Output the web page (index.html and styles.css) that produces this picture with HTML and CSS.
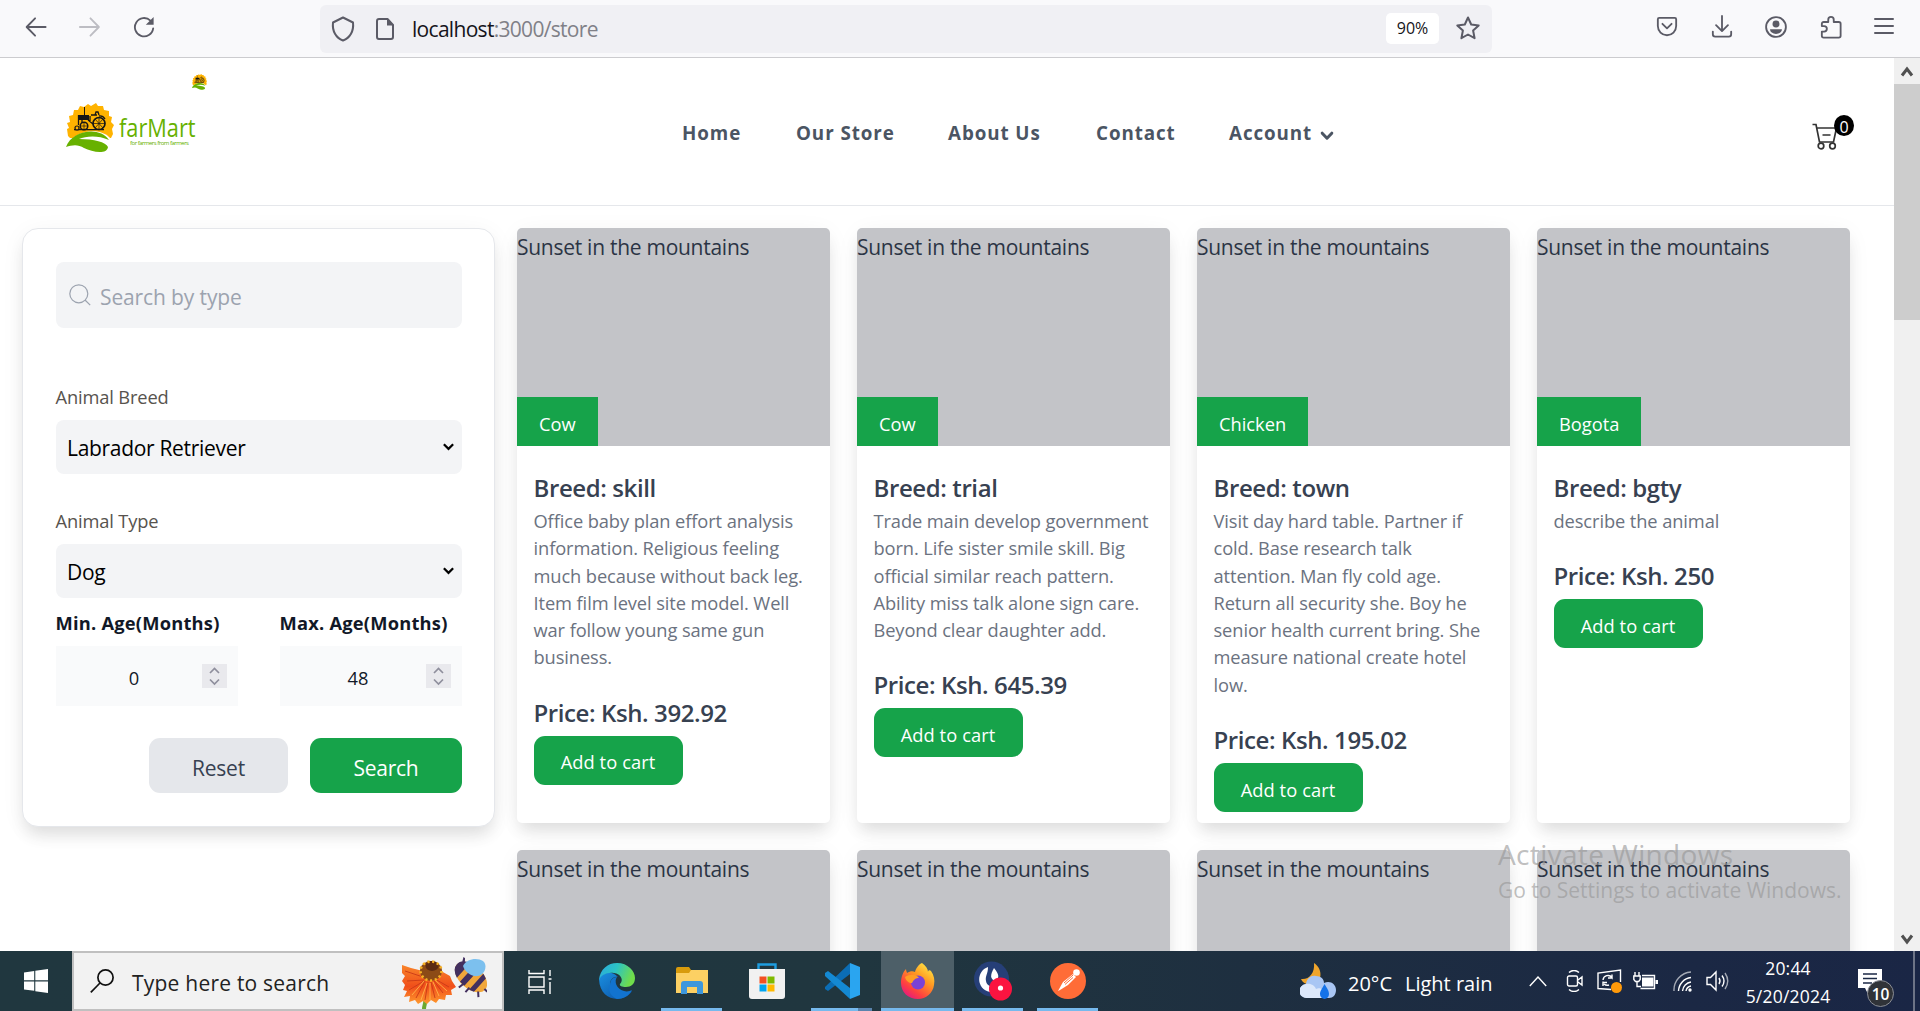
FILE: index.html
```html
<!DOCTYPE html>
<html lang="en">
<head>
<meta charset="utf-8">
<title>farMart store</title>
<link rel="stylesheet" href="styles.css">
</head>
<body>
<svg width="0" height="0" class="defs" aria-hidden="true">
  <defs>
    <symbol id="sun-tractor" viewBox="0 0 48 50">
      <path fill="#ffb300" d="M2 33 L1 26 3 25 1 20 4 19 3 13 7 12 8 7 12 7 14 3 18 4 22 1 25 3 30 0 32 3 37 3 38 7 43 8 43 13 46 14 45 19 48 22 46 26 47 31 45 35 H4Z"/>
      <path fill="#161616" d="M12 12h11v5H12zM18 4h1v8H18zM8 26h30v1.200H8z"/>
      <path fill="none" stroke="#161616" stroke-width="1.300" d="M12.500 12v10M16 12v10M22 17l5 4M25 12h6M29 12l1-3 2 0 1 3M33 13a6 6 0 0 1 6 3M24 13v6"/>
      <circle cx="18" cy="23" r="3.800" fill="#ffb300" stroke="#161616" stroke-width="1.500"/>
      <circle cx="11" cy="25" r="2" fill="#ffb300" stroke="#161616" stroke-width="1.200"/>
      <circle cx="33" cy="20.500" r="6" fill="#ffb300" stroke="#161616" stroke-width="1.700"/>
      <path stroke="#161616" stroke-width=".7" d="M27 20.500h12M33 14v13M29 16l8 9M37 16l-8 9M15 23h6M18 20v6"/>
      <path fill="#fff" d="M0 44C6 28 34 22 45 36v8z"/>
      <path fill="#67b100" d="M0 44C6 27 34 23 43 37 32 32 20 33 13 36c15 0 27 3 29 8-1 8-16 5-24 1C12 41 6 42 0 44Z"/>
    </symbol>
    <symbol id="chev" viewBox="0 0 14 10"><path d="M2 2l5 5 5-5" fill="none" stroke="currentColor" stroke-width="2.400"/></symbol>
    <symbol id="spin" viewBox="0 0 25 24"><path fill="none" stroke="#8f8f9d" stroke-width="1.700" d="M8 9l4.500-4.500L17 9M8 15.500l4.500 4.500 4.500-4.500"/></symbol>
  </defs>
</svg>

<div class="screen">
  <div class="toolbar">
    <svg class="ic back" viewBox="0 0 24 24"><path d="M22.500 12H2M11 2.500L1.800 12l9.200 9.500"/></svg>
    <svg class="ic fwd" viewBox="0 0 24 24"><path d="M1 12h20.500M12.500 2.500l9.200 9.500-9.200 9.500"/></svg>
    <svg class="ic reload" viewBox="0 0 24 24"><path d="M22 13.500A10 10 0 1 1 19 5"/><path class="solid" d="M22.500 1v8.500H14z"/></svg>
    <div class="urlbar">
      <svg class="ic shield" viewBox="0 0 24 26"><path d="M12 1.500L22 6.500C23 15 19 22 12 24.500 5 22 1 15 2 6.500Z"/></svg>
      <svg class="ic page" viewBox="0 0 20 24"><path d="M4 2h8.500L18 8v12a2 2 0 0 1-2 2H4a2 2 0 0 1-2-2V4a2 2 0 0 1 2-2z"/><path class="solid" d="M12 1l7 7.500h-7z"/></svg>
      <span class="url">localhost<i>:3000/store</i></span>
      <span class="zoom">90%</span>
      <svg class="ic star" viewBox="0 0 26 26"><path d="M13 2.500l3.200 7 7.500.9-5.600 5.100 1.500 7.700L13 19.500l-6.600 3.700 1.500-7.700-5.600-5.100 7.500-.9z"/></svg>
    </div>
    <div class="tools">
      <svg class="ic" viewBox="0 0 24 24"><path d="M3.500 2h17A1.500 1.500 0 0 1 22 3.500V11a10 10 0 0 1-20 0V3.500A1.500 1.500 0 0 1 3.500 2zM7 8.500l5 5 5-5"/></svg>
      <svg class="ic" viewBox="0 0 24 24"><path d="M12 0v16M5.500 10l6.500 6.500 6.500-6.500M2 17v3a2.500 2.500 0 0 0 2.500 2.500h15A2.500 2.500 0 0 0 22 20v-3"/></svg>
      <svg class="ic" viewBox="0 0 24 24"><circle cx="12" cy="12" r="10.800"/><circle class="solid" cx="12" cy="8.700" r="3.800"/><path class="solid" d="M5.500 14.500h13c0 3-3 5-6.500 5s-6.500-2-6.500-5z"/></svg>
      <svg class="ic" viewBox="0 0 24 26"><path d="M4 24.500a2 2 0 0 1-2-2V18h2.500a3 3 0 0 0 0-6H2V9.500a2 2 0 0 1 2-2h5V5a3 3 0 0 1 6 0v2.500h5.500a2 2 0 0 1 2 2v13a2 2 0 0 1-2 2z"/></svg>
      <svg class="ic menu" viewBox="0 0 20 24"><path d="M1 4h18M1 11h18M1 18h18"/></svg>
    </div>
  </div>

  <div class="viewport">
    <div class="page-body">
      <header class="site-header">
        <div class="logo">
          <svg class="mark" viewBox="0 0 48 50"><use href="#sun-tractor"/></svg>
          <div class="brand"><b>farMart</b><small>for farmers from farmers</small></div>
          <svg class="mini" viewBox="0 0 48 50" preserveAspectRatio="none"><use href="#sun-tractor"/></svg>
        </div>
        <nav class="nav">
          <a class="n1">Home</a><a class="n2">Our Store</a><a class="n3">About Us</a><a class="n4">Contact</a><a class="n5">Account</a>
          <svg class="nav-chev" viewBox="0 0 14 10"><path d="M2.200 2.200l4.800 5 4.800-5" fill="none" stroke="currentColor" stroke-width="3" stroke-linecap="round" stroke-linejoin="round"/></svg>
        </nav>
        <div class="cart">
          <svg viewBox="0 0 26 28"><g fill="none" stroke="#333" stroke-width="1.700"><path d="M.5 2.500H4L7.500 20H21.500L24.500 6H5M10.500 13h8"/><circle cx="9" cy="24" r="2.800"/><circle cx="20.500" cy="24" r="2.800"/></g></svg>
          <span class="count">0</span>
        </div>
      </header>

      <main class="content">
        <form class="filters">
          <div class="search-box">
            <svg viewBox="0 0 22 22"><g fill="none" stroke="#9ca3af" stroke-width="1.200"><circle cx="9.800" cy="9.800" r="9"/><path d="M16 16l5.200 5.200"/></g></svg>
            <span>Search by type</span>
          </div>
          <label class="lbl lbl-breed">Animal Breed</label>
          <div class="select"><span>Labrador Retriever</span><svg><use href="#chev"/></svg></div>
          <label class="lbl lbl-type">Animal Type</label>
          <div class="select"><span>Dog</span><svg><use href="#chev"/></svg></div>
          <div class="ages">
            <div class="age"><label>Min. Age(Months)</label><div class="num"><span>0</span><svg><use href="#spin"/></svg></div></div>
            <div class="age"><label>Max. Age(Months)</label><div class="num"><span>48</span><svg><use href="#spin"/></svg></div></div>
          </div>
          <div class="actions"><button type="button" class="reset">Reset</button><button type="button" class="submit">Search</button></div>
        </form>

        <section class="products">
          <article class="card">
            <div class="photo"><span class="alt">Sunset in the mountains</span><span class="tag">Cow</span></div>
            <div class="info"><h3>Breed: skill</h3><p>Office baby plan effort analysis<br>information. Religious feeling<br>much because without back leg.<br>Item film level site model. Well<br>war follow young same gun<br>business.</p><h4>Price: Ksh. 392.92</h4><button>Add to cart</button></div>
          </article>
          <article class="card">
            <div class="photo"><span class="alt">Sunset in the mountains</span><span class="tag">Cow</span></div>
            <div class="info"><h3>Breed: trial</h3><p>Trade main develop government<br>born. Life sister smile skill. Big<br>official similar reach pattern.<br>Ability miss talk alone sign care.<br>Beyond clear daughter add.</p><h4>Price: Ksh. 645.39</h4><button>Add to cart</button></div>
          </article>
          <article class="card">
            <div class="photo"><span class="alt">Sunset in the mountains</span><span class="tag">Chicken</span></div>
            <div class="info"><h3>Breed: town</h3><p>Visit day hard table. Partner if<br>cold. Base research talk<br>attention. Man fly cold age.<br>Return all security she. Boy he<br>senior health current bring. She<br>measure national create hotel<br>low.</p><h4>Price: Ksh. 195.02</h4><button>Add to cart</button></div>
          </article>
          <article class="card">
            <div class="photo"><span class="alt">Sunset in the mountains</span><span class="tag">Bogota</span></div>
            <div class="info"><h3>Breed: bgty</h3><p>describe the animal</p><h4>Price: Ksh. 250</h4><button>Add to cart</button></div>
          </article>
          <article class="card"><div class="photo"><span class="alt">Sunset in the mountains</span></div></article>
          <article class="card"><div class="photo"><span class="alt">Sunset in the mountains</span></div></article>
          <article class="card"><div class="photo"><span class="alt">Sunset in the mountains</span></div></article>
          <article class="card"><div class="photo"><span class="alt">Sunset in the mountains</span></div></article>
        </section>
      </main>
    </div>
    <div class="scrollbar">
      <svg viewBox="0 0 26 26"><path d="M8 17.500l5-6.500 5 6.500" fill="none" stroke="#505050" stroke-width="3"/></svg>
      <div class="thumb"></div>
      <svg class="down" viewBox="0 0 26 26"><path d="M8 10.500l5 6.500 5-6.500" fill="none" stroke="#505050" stroke-width="3"/></svg>
    </div>
  </div>

  <div class="watermark"><div>Activate Windows</div><p>Go to Settings to activate Windows.</p></div>

  <div class="taskbar">
    <div class="start"><svg viewBox="0 0 24 24" width="24" height="24" fill="#fff"><path d="M0 3.400l10.200-1.500v9.400H0zM11.300 1.700L24 0v11.300H11.300zM0 12.500h10.200v9.300L0 20.500zM11.300 12.500H24V24l-12.700-1.800z"/></svg></div>
    <div class="winsearch">
      <svg class="mag" viewBox="0 0 24 24"><g fill="none" stroke="#111" stroke-width="1.700"><circle cx="15.500" cy="8.500" r="7.600"/><path d="M10 14L.8 23.300"/></g></svg>
      <span>Type here to search</span>
      <svg class="bloom" viewBox="0 0 86 52">
        <defs><linearGradient id="petal" x1="0" y1="0" x2="0" y2="1"><stop offset="0" stop-color="#f9852a"/><stop offset=".55" stop-color="#f04e1a"/><stop offset="1" stop-color="#ff9a2e"/></linearGradient></defs>
        <path d="M24 42c1 4-1 6-1 10" stroke="#6ca82e" stroke-width="4" fill="none"/>
        <path fill="url(#petal)" d="M22 14L10 11 1 8v8l3 3-3 5 3 4-2 5 4 1-3 6 6-1-1 6 6-2 3 4 5-3 4 3 4-4 5 3 3-4 6 1 1-5 6 0-1-5 5-3-4-6-2-5-9-5z"/>
        <path stroke="#c93a17" stroke-width=".9" fill="none" d="M22 20L4 14M23 23L6 24M23 24L8 33M24 24l-9 17M27 25l-3 18M30 25l4 16M33 24l9 12M34 22l14 8"/>
        <path stroke="#ffb54a" stroke-width=".9" fill="none" d="M23 24L11 38M26 26l-6 17M29 26l0 17M32 25l6 14M34 23l12 11"/>
        <ellipse cx="30" cy="14" rx="11" ry="10" fill="#8c4b16"/><ellipse cx="31" cy="9" rx="6.500" ry="5" fill="#5c2b12"/>
        <ellipse cx="30" cy="14" rx="10.500" ry="9.500" fill="none" stroke="#f7b223" stroke-width="2.600" stroke-dasharray="2.200 2.600"/>
        <g transform="translate(70 20) rotate(42)"><ellipse rx="19" ry="11.500" fill="#f1a73b"/><path d="M-19 0a19 11.500 0 0 1 9-10v20a19 11.500 0 0 1-9-10zM-5-11h6v22h-6zM7-10.700l5 1.800v17.800l-5 1.800zM-16-4l-3-6 2 0 4 5z" fill="#43305f"/><path d="M-1 10l-1 6M6 9l0 6M15 6l4 4M18 0h4" stroke="#43305f" stroke-width="2"/></g>
        <path fill="#7cc0ee" d="M62 9c3-7 14-9 20-5 5 4 2 14-5 15-7 1-13-4-15-10z"/>
      </svg>
    </div>
    <div class="app taskview"><svg viewBox="0 0 24 24" width="24" height="24"><path fill="none" stroke="#fff" stroke-width="1.400" d="M1 0v3.500h15V0M1 7h15v10H1zM1 24v-4h15v4M22 0v6M22 12v12M20.500 9h3"/></svg></div>
    <div class="app edge"><svg viewBox="0 0 36 36" width="36" height="36">
      <defs><linearGradient id="eg" x1="0" y1="0" x2="1" y2=".3"><stop offset="0" stop-color="#2aa8e0"/><stop offset=".5" stop-color="#2cc3c4"/><stop offset="1" stop-color="#6fdc4b"/></linearGradient><linearGradient id="eb" x1="0" y1="0" x2="1" y2="1"><stop offset="0" stop-color="#1a8fe0"/><stop offset="1" stop-color="#0b4fa3"/></linearGradient></defs>
      <path fill="url(#eb)" d="M0 16C4 8 14 8 19 14c-5-1-8 3-8 8 0 7 7 12 22 6C26 40 1 40 0 16z"/>
      <path fill="url(#eg)" d="M0 17C1 6 9 0 18 0c11 0 18 8 18 15 0 6-4 9-9 9-4 0-7-1-6-3 4-4 1-10-6-11C8 9 2 12 0 17z"/>
      <path fill="#1273cf" d="M11 22c0-5 3-8 7-8-3 4-1 12 7 14 3 1 6 0 8-1-3 6-9 9-15 9C11 33 9 27 11 22z"/>
    </svg></div>
    <div class="app run"><svg viewBox="0 0 32 28" width="32" height="28"><path fill="#d89b0c" d="M0 2a2 2 0 0 1 2-2h11l2 3v6H0z"/><path fill="#fcd063" d="M0 6h13l2-3h17v23H0z"/><path fill="#3d97dc" d="M5 27V17a3 3 0 0 1 3-3h16a3 3 0 0 1 3 3v10h-6v-7H11v7z"/></svg></div>
    <div class="app store"><svg viewBox="0 0 36 36" width="36" height="36"><path d="M9.500 8V1.500h17V8" fill="none" stroke="#1e9de0" stroke-width="2.400"/><path fill="#f1f1f1" d="M0 6h36v27a3 3 0 0 1-3 3H3a3 3 0 0 1-3-3z"/><path fill="#f25022" d="M10.500 13.500h7v7h-7z"/><path fill="#7fba00" d="M18.500 13.500h7v7h-7z"/><path fill="#00a4ef" d="M10.500 21.500h7v7h-7z"/><path fill="#ffb900" d="M18.500 21.500h7v7h-7z"/></svg></div>
    <div class="app run code"><svg viewBox="0 0 36 36" width="36" height="36"><path fill="#0b6db5" d="M1 24L26 0v11L4 28l-3-2z"/><path fill="#1489d3" d="M1 10l3-2 22 17v11L1 13z"/><path fill="#2aa5f0" d="M26 0l10 4v28l-10 4z"/></svg></div>
    <div class="app run active"><svg viewBox="0 0 36 36" width="36" height="36">
      <defs><linearGradient id="fx" x1=".9" y1="0" x2=".2" y2="1"><stop offset="0" stop-color="#fff24a"/><stop offset=".4" stop-color="#ff9a22"/><stop offset=".75" stop-color="#ff4040"/><stop offset="1" stop-color="#e31587"/></linearGradient></defs>
      <path fill="url(#fx)" d="M22 0c4 3 6 6 6 9 0-2 2-2 3-1 3 4 4 9 3 14-1 8-8 14-16 14C8 36 1 29 1 20 1 14 3 9 6 6c0 2 1 3 1 4 3-2 6-2 8-1 1-4 4-8 7-9z"/>
      <circle cx="18" cy="19.500" r="7" fill="#7a42d6"/><path fill="#ff9d25" d="M5 14c5-3 11-3 14 1-3 0-5 1-7 5-3 0-6-2-7-6z"/>
    </svg></div>
    <div class="app run"><svg viewBox="0 0 40 40" width="40" height="40"><circle cx="18.500" cy="18" r="17.500" fill="#263f78"/><path fill="#fff" d="M15 6C3 10 3 28 17 31c6 0 10-3 11-7-4 3-14 3-15-4-1-5 2-7 2-14z"/><path fill="#fff" d="M21 7c5 6 6 10 1 13-5-2-5-6-1-13z"/><circle cx="27.500" cy="28" r="11.500" fill="#fb1440"/><circle cx="27.500" cy="27" r="2.600" fill="#fff"/></svg></div>
    <div class="app run"><svg viewBox="0 0 36 36" width="36" height="36"><circle cx="18" cy="18" r="18" fill="#ff6c37"/><path fill="#fff" d="M8 28l5-9 10-8 3 3-8 8-8 5z"/><circle cx="26.500" cy="9.500" r="3.300" fill="#fff"/><path stroke="#ff6c37" d="M14 20l9-8M15 21.500l8-7"/></svg></div>

    <div class="tray">
      <svg class="weather" viewBox="0 0 36 36"><path fill="#f0a52c" d="M14 0c8 5 9 17 1 21C10 23 3 21 1 16c8 1 14-6 13-16z"/><path fill="#a9c6f4" d="M7 35a7 7 0 0 1-1-14c1-6 5-9 10-8 5 0 8 3 8 7 6-3 12 1 12 7 0 5-3 8-7 8z"/><path fill="#dce8fb" d="M7 35a7 7 0 0 1-1-14c5-1 9 2 10 5 4-2 9 1 9 5v4z"/><path fill="#1472e8" d="M24.500 21c3 5 4.500 7 4.500 10a4.500 5 0 0 1-9 0c0-3 2-5 4.500-10z"/></svg>
      <span class="temp">20°C</span><span class="cond">Light rain</span>
      <svg class="t-chev" viewBox="0 0 18 11"><path d="M.8 10L9 1l8.200 9"/></svg>
      <svg class="t-cam" viewBox="0 0 18 22"><path d="M3 2.500C6 0 10 0 13 2.500M3 19.500c3 2.500 7 2.500 10 0M3 6h7a1.500 1.500 0 0 1 1.500 1.500v7A1.500 1.500 0 0 1 10 16H3a1.500 1.500 0 0 1-1.500-1.500v-7A1.500 1.500 0 0 1 3 6zM12 10l4-3v8l-4-3"/></svg>
      <svg class="t-upd" viewBox="0 0 25 24"><path d="M14 20.500L1 19.500V4L23.500 1v12M6 11a5 5 0 0 1 9-2.500V5.500M15 9h-4M6 12.500V17M6 13.500h4M7 15a5 5 0 0 0 5 1"/><circle cx="19.500" cy="18.500" r="5.500" class="dot"/></svg>
      <svg class="t-bat" viewBox="0 0 25 18"><path d="M2 0v4M6 0v4M.8 4h6.400v3.500l-1.500 2H2.500L.8 7.500zM4 10v4.500h4M9 3.500h12.500v13H7.500"/><path class="fill" d="M9 5.500h11.500v9H9zM22.500 8H25v4h-2.500z"/></svg>
      <svg class="t-wifi" viewBox="0 0 20 21"><path d="M1 20A18 18 0 0 1 18 1" opacity=".6"/><path d="M5.500 20A14 14 0 0 1 18 6.500M9.500 20A10 10 0 0 1 18 11M13 20a6 6 0 0 1 5-5"/><circle class="fill" cx="17" cy="19" r="1.700"/></svg>
      <svg class="t-vol" viewBox="0 0 23 22"><path d="M1 7.500h3.500L10 2v18l-5.500-5.500H1zM13 8q2 3 0 6M16 5.500q4 5.500 0 11"/><path d="M19 3q5.500 8 0 16" opacity=".6"/></svg>
      <div class="clock"><span>20:44</span><span>5/20/2024</span></div>
      <div class="notif"><svg viewBox="0 0 24 26" width="24" height="26"><path fill="#fff" d="M0 0h24v19H12l-2 6-3-6H0z"/><path d="M5 5h14M5 9.500h14M5 14h9" stroke="#1b2945" stroke-width="1.300"/></svg><b>10</b></div>
      <i class="peek"></i>
    </div>
  </div>
</div>
</body>
</html>
```
FILE: styles.css
```css
* { box-sizing: border-box; }
body {
  margin: 0;
  font-family: "Open Sans", "Noto Sans", sans-serif;
  font-size: 21px;
  color: #2b3445;
  background: #fff;
}
h3, h4, p { margin: 0; }
button { border: 0; font-family: inherit; padding: 0; }
svg { display: block; flex: none; }
.defs { position: absolute; }
.screen {
  position: relative;
  width: 1920px;
  height: 1011px;
  overflow: hidden;
  display: flex;
  flex-direction: column;
}

/* Browser toolbar */
.toolbar {
  flex: none;
  height: 58px;
  display: flex;
  align-items: center;
  padding: 0 26px 3px 25px;
  background: #f9f9fb;
  border-bottom: 1px solid #cccccf;
}
.ic { width: 22px; height: 24px; fill: none; stroke: #5b5b66; stroke-width: 2; stroke-linecap: round; stroke-linejoin: round; }
.ic .solid { fill: #5b5b66; stroke: none; }
.fwd { margin-left: 32px; stroke: #bdbdc3; }
.reload { margin-left: 32px; }
.urlbar {
  width: 1172px;
  height: 48px;
  margin: 3px 0 0 165px;
  padding: 0 11px;
  display: flex;
  align-items: center;
  background: #f0f0f4;
  border-radius: 6px;
}
.page { margin-left: 20px; width: 20px; }
.shield { width: 24px; height: 26px; }
.url { margin-left: 17px; letter-spacing: -.7px; color: #15141a; padding-bottom: 0; }
.url i { font-style: normal; color: #808087; }
.zoom {
  margin-left: auto;
  width: 53px;
  height: 31px;
  line-height: 31px;
  text-align: center;
  font-size: 16px;
  color: #15141a;
  background: #fff;
  border-radius: 5px;
}
.star { width: 26px; height: 26px; margin: -2px 0 0 16px; }
.tools { margin-left: auto; display: flex; gap: 32.500px; align-items: center; }
.menu { width: 20px; }

/* Page viewport */
.viewport { flex: 1; min-height: 0; display: flex; overflow: hidden; }
.page-body { width: 1894px; overflow: hidden; }
.site-header {
  height: 148px;
  display: flex;
  border-bottom: 1px solid #e5e7eb;
}
.logo { width: 682px; padding: 45px 0 0 66px; display: flex; align-items: flex-start; }
.mark { width: 48px; height: 50px; }
.brand { width: 78px; margin: 11px 0 0 5px; display: flex; flex-direction: column; color: #67b100; }
.brand b { font: 400 25px/26px "Open Sans", sans-serif; transform: scaleX(.87); transform-origin: 0 0; }
.brand small { font-size: 6px; line-height: 7px; letter-spacing: -.5px; padding-left: 11px; white-space: nowrap; }
.mini { width: 15px; height: 16px; margin: -29px 0 0 -5px; }
.nav { width: 1130px; padding-top: 58px; display: flex; align-items: flex-start; font-size: 18.8px; line-height: 34px; font-weight: 700; color: #4b5563; letter-spacing: .92px; }
.nav a { flex: none; white-space: nowrap; }
.n1 { width: 114px; }
.n2 { width: 152px; }
.n3 { width: 148px; }
.n4 { width: 133px; }
.n5 { width: 91px; }
.nav-chev { width: 14px; height: 10px; margin-top: 15px; }
.cart { position: relative; width: 42px; padding-top: 64px; }
.cart svg { width: 26px; height: 28px; }
.count {
  position: absolute;
  left: 22px;
  top: 57px;
  width: 20px;
  height: 21px;
  border-radius: 50%;
  background: #000;
  color: #fff;
  font-size: 16px;
  line-height: 24px;
  text-align: center;
}
.content { display: flex; gap: 22px; padding: 22px 0 0 22px; align-items: flex-start; }

/* Filters panel */
.filters {
  width: 473px;
  height: 599px;
  padding: 33px 32px 0 33px;
  border: 1px solid #e5e7eb;
  border-radius: 16px;
  background: #fff;
  box-shadow: 0 11px 16px -3px rgba(0,0,0,.1), 0 4px 26px -2px rgba(0,0,0,.06);
}
.search-box {
  height: 66px;
  padding: 0 13px 1px;
  display: flex;
  align-items: center;
  gap: 9px;
  color: #9ca3af;
  background: #f3f4f6;
  border-radius: 8px;
}
.search-box svg { width: 22px; height: 22px; }
.search-box span { padding-top: 4px; letter-spacing: -.12px; }
.lbl { display: block; font-size: 18.3px; line-height: 27px; letter-spacing: -.15px; color: #57534e; margin-left: -.5px; }
.lbl-breed { margin-top: 55px; }
.lbl-type { margin-top: 33px; }
.lbl + .select { margin-top: 10px; }
.select {
  height: 54px;
  padding: 2px 7px 0 11px;
  display: flex;
  align-items: center;
  justify-content: space-between;
  color: #000;
  letter-spacing: -.31px;
  background: #f3f4f6;
  border-radius: 8px;
}
.select svg { width: 13px; height: 10px; margin-top: -2px; }
.ages { display: flex; justify-content: space-between; margin-top: 11px; }
.age { width: 182px; }
.age label { display: block; font-size: 18.3px; line-height: 27px; font-weight: 700; letter-spacing: .22px; color: #111827; white-space: nowrap; margin-left: -.5px; }
.num { height: 60px; margin-top: 10px; padding-right: 11px; display: flex; align-items: center; font-size: 18.3px; color: #111827; background: #f9fafb; }
.num span { flex: 1; text-align: center; padding: 2px 0 0 10px; }
.num svg { width: 25px; height: 24px; background: #e9e9ed; }
.actions { display: flex; justify-content: flex-end; gap: 22px; margin-top: 32px; }
.actions button { height: 55px; border-radius: 11px; font-size: 21px; letter-spacing: -.25px; padding-top: 4px; }
.reset { width: 139px; background: #e5e7eb; color: #374151; }
.submit { width: 152px; background: #16a34a; color: #fff; }

/* Product grid */
.products { display: grid; grid-template-columns: repeat(4, 313px); column-gap: 27px; row-gap: 27px; grid-template-rows: 595px 595px; height: 723px; }
.card { border-radius: 5px; background: #fff; box-shadow: 0 11px 16px -3px rgba(0,0,0,.1), 0 4px 26px -2px rgba(0,0,0,.06); }
.photo { height: 218px; display: flex; flex-direction: column; justify-content: space-between; align-items: flex-start; background: #c3c4c8; border-radius: 5px 5px 0 0; }
.alt { line-height: 38px; letter-spacing: -.27px; }
.tag { height: 49px; padding: 0 22px; font-size: 18.3px; line-height: 53px; color: #fff; background: #16a34a; }
.info { padding: 22px 0 0 16.500px; }
.info h3, .info h4 { font-size: 24px; line-height: 39px; height: 38px; font-weight: 600; letter-spacing: -.4px; color: #374151; }
.info p { margin: 1px 0 22px; font-size: 18.3px; line-height: 27.3px; letter-spacing: -.1px; color: #6b7280; white-space: nowrap; }
.info button { display: block; width: 149px; height: 49px; margin-top: 5px; padding-top: 3px; border-radius: 11px; font-size: 18.3px; letter-spacing: .08px; color: #fff; background: #16a34a; }

.scrollbar { width: 26px; background: #f0f0f0; display: flex; flex-direction: column; }
.scrollbar svg { width: 26px; height: 26px; }
.thumb { height: 236px; background: #cdcdcd; }
.scrollbar .down { margin-top: auto; }

/* Activation notice floating over the desktop */
.watermark { position: absolute; left: 1498px; top: 835px; color: rgba(150,150,150,.62); white-space: nowrap; }
.watermark div { font-size: 28px; line-height: 38px; letter-spacing: .36px; }
.watermark p { line-height: 30px; letter-spacing: -.02px; margin-top: 2px; }

/* Windows taskbar */
.taskbar { flex: none; height: 60px; display: flex; background: linear-gradient(90deg, #20373f 0%, #20363f 45%, #1e2f40 65%, #1b2844 88%, #1a2645 100%); }
.start { width: 72px; display: flex; align-items: center; justify-content: center; }
.winsearch { width: 432px; height: 60px; display: flex; align-items: center; background: #f2f2f2; border: 2px solid #c0c0c0; padding-left: 16px; color: #222; }
.mag { width: 24px; height: 24px; margin-top: -1px; }
.winsearch span { margin-left: 18px; width: 266px; padding-top: 4px; font-size: 21px; letter-spacing: .22px; }
.bloom { width: 86px; height: 52px; margin: 4px 0 0 3px; }
.app { position: relative; flex: none; width: 61px; margin-right: 14px; height: 60px; display: flex; align-items: center; justify-content: center; border-bottom: 3px solid transparent; padding-top: 3px; }
.taskview { width: 72px; margin-right: 0; padding-top: 4px; }
.edge { width: 82px; margin-right: 3px; }
.run { border-bottom-color: #76b9ed; }
.code { margin-right: 9px; border-image: linear-gradient(90deg, #76b9ed 76%, #5a83ad 76%) 1; }
.active { width: 73px; margin-right: 8px; background: #4d5f68; }
.tray { position: relative; flex: 1; display: flex; align-items: center; color: #fff; padding-left: 188px; }
.tray svg { fill: none; stroke: #fff; stroke-width: 1.400; }
.tray .weather { width: 36px; height: 36px; stroke: none; }
.temp { width: 57px; margin-left: 12px; font-size: 20px; padding-top: 4px; }
.cond { width: 124px; font-size: 20px; padding-top: 4px; white-space: nowrap; }
.t-chev { width: 18px; height: 11px; margin-right: 19px; }
.t-cam { width: 18px; height: 22px; margin-right: 13px; }
.t-upd { width: 25px; height: 24px; margin-right: 11px; }
.t-bat { width: 25px; height: 18px; margin-right: 15px; }
.t-wifi { width: 20px; height: 21px; margin-right: 13px; }
.t-vol { width: 23px; height: 22px; }
.tray .dot { fill: #ff9a0a; stroke: none; }
.tray .fill { fill: #fff; stroke: none; }
.clock { width: 118px; padding-top: 1px; display: flex; flex-direction: column; align-items: center; font-size: 17.5px; line-height: 28px; letter-spacing: .2px; }
.notif { position: relative; width: 55px; height: 24px; margin-left: 11px; }
.notif svg { stroke: none; }
.notif b { position: absolute; left: 9px; top: 11px; width: 27px; height: 27px; border: 1px solid #8a8d95; border-radius: 50%; background: #303338; font-size: 15.500px; font-weight: 600; line-height: 26px; text-align: center; }
.peek { width: 2px; height: 60px; background: #6d7486; }
```
